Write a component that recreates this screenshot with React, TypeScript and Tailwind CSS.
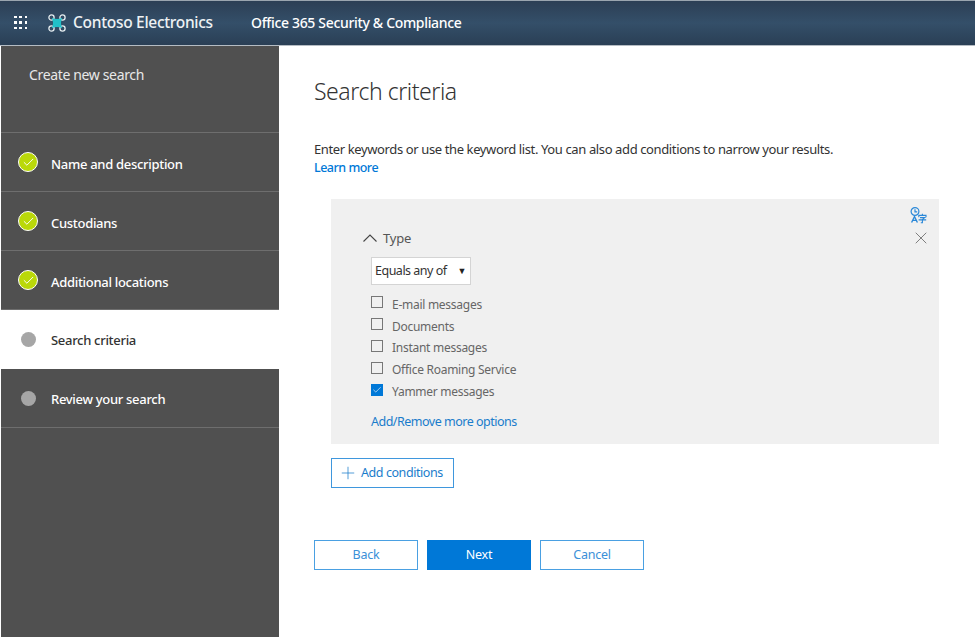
import { Check, Plus, X } from 'lucide-react'

const steps = [
  { label: 'Name and description', state: 'done' },
  { label: 'Custodians', state: 'done' },
  { label: 'Additional locations', state: 'done' },
  { label: 'Search criteria', state: 'current' },
  { label: 'Review your search', state: 'todo' },
]

const options = [
  { label: 'E-mail messages', checked: false },
  { label: 'Documents', checked: false },
  { label: 'Instant messages', checked: false },
  { label: 'Office Roaming Service', checked: false },
  { label: 'Yammer messages', checked: true },
]

function Waffle() {
  return (
    <div className="grid grid-cols-3 gap-[3px] w-[13px]">
      {Array.from({ length: 9 }).map((_, i) => (
        <span key={i} className="w-[2.5px] h-[2.5px] bg-white" />
      ))}
    </div>
  )
}

function Logo() {
  return (
    <svg width="18" height="18" viewBox="0 0 18 18" fill="none">
      <circle cx="3.5" cy="3.5" r="2.6" stroke="#e6edf0" strokeWidth="1.3" />
      <circle cx="14.5" cy="3.5" r="2.6" stroke="#e6edf0" strokeWidth="1.3" />
      <circle cx="3.5" cy="14.5" r="2.6" stroke="#e6edf0" strokeWidth="1.3" />
      <circle cx="14.5" cy="14.5" r="2.6" stroke="#e6edf0" strokeWidth="1.3" />
      <path d="M3.8 3.8 Q9 6.2 14.2 3.8 Q11.8 9 14.2 14.2 Q9 11.8 3.8 14.2 Q6.2 9 3.8 3.8 Z" fill="#21c0c8" />
    </svg>
  )
}

function TranslateIcon() {
  return (
    <svg width="17" height="17" viewBox="0 0 17 17" fill="none" stroke="#2b88d8" strokeWidth="1.2">
      <circle cx="5" cy="4.5" r="3.9" />
      <path d="M5 2.3 V4.8 H7.2" />
      <path d="M1.6 15.5 L4.5 9.5 L7.4 15.5 M2.8 13.4 H6.2" strokeWidth="1.4" />
      <path d="M12.4 6.8 V8.4 M8.8 10.2 V8.4 H16 V10.2 M10 10.6 H14.8 L12.4 12.4 V15.8 L10.8 15.8 M8.6 12.9 H16.2" strokeWidth="1.1" />
    </svg>
  )
}

function StepDot({ state }: { state: string }) {
  if (state === 'done') {
    return (
      <span className="w-5 h-5 rounded-full bg-[#bad80a] border-[1.5px] border-white flex items-center justify-center">
        <Check className="w-[13px] h-[13px] text-white" strokeWidth={1.75} />
      </span>
    )
  }
  return (
    <span className="w-5 h-5 flex items-center justify-center">
      <span className="w-[15px] h-[15px] rounded-full bg-[#a6a6a6]" />
    </span>
  )
}

export default function App() {
  return (
    <div className="h-[637px] w-[975px] overflow-hidden bg-white flex flex-col font-['Noto_Sans',sans-serif] text-[#333333]">
      {/* Top bar */}
      <header className="h-[46px] shrink-0 bg-gradient-to-b from-[#2c3f55] via-[#344f69] to-[#2a3f55] border-t border-t-[#9aa5af] border-b border-b-[#b5bcc3] flex items-center text-white">
        <div className="pl-[14px] w-[48px] -mt-px">
          <Waffle />
        </div>
        <Logo />
        <span className="ml-[7px] text-[15.5px] font-medium tracking-[-0.3px] w-[178px] text-[#eef2f4]">Contoso Electronics</span>
        <span className="-mt-px text-[14px] tracking-[-0.33px] font-medium">Office 365 Security &amp; Compliance</span>
      </header>

      <div className="flex flex-1 min-h-0">
        {/* Wizard steps */}
        <aside className="ml-px w-[278px] shrink-0 bg-[#505050] text-white">
          <div className="h-[87px] pl-[28px] pt-[19px] text-[14px] leading-5 tracking-[-0.35px] text-[#e8e8e8] border-b border-[#6e6e6e]">
            Create new search
          </div>
          {steps.map((s) => (
            <div
              key={s.label}
              className={
                s.state === 'current'
                  ? 'h-[59px] pl-[17px] flex items-center gap-[13px] bg-white text-[#333333] text-[13px] tracking-[-0.3px] font-medium'
                  : 'h-[59px] pl-[17px] flex items-center gap-[13px] border-b border-[#6e6e6e] text-[13px] tracking-[-0.3px] font-medium'
              }
            >
              <StepDot state={s.state} />
              <span className={s.state === 'done' ? 'mt-[5px]' : s.state === 'todo' ? 'mt-[3px]' : 'mt-[2px]'}>{s.label}</span>
            </div>
          ))}
        </aside>

        {/* Main content */}
        <main className="flex-1 pl-[35px] pr-[35px] pt-[26px]">
          <h1 className="text-[23px] leading-[38px] font-light tracking-[-0.45px] text-[#333333]">Search criteria</h1>
          <p className="mt-[30px] text-[13px] leading-[18px] tracking-[-0.38px] text-[#333333]">
            Enter keywords or use the keyword list. You can also add conditions to narrow your results.
          </p>
          <a className="mt-px text-[12.5px] leading-[18px] tracking-[-0.5px] font-medium text-[#0078d7] block">Learn more</a>

          <section className="relative mt-[22px] ml-[17px] h-[245px] w-[608px] bg-[#f0f0f0] pl-[40px] pt-[29px]">
            <div className="absolute right-[12px] top-[8px]">
              <TranslateIcon />
            </div>
            <X className="absolute right-[8px] top-[29px] w-5 h-5 text-[#666666]" strokeWidth={1} />
            <div className="flex items-center gap-[6px] text-[13px] leading-5 tracking-[-0.2px] text-[#555555] -ml-[8px]">
              <svg width="14" height="8" viewBox="0 0 14 8" fill="none" stroke="#444444" strokeWidth="1.1">
                <path d="M0.5 7.5 L7 1 L13.5 7.5" />
              </svg>
              Type
            </div>
            <div className="mt-[9px] w-[100px] h-[28px] bg-white border border-[#d4d4d4] flex items-center justify-between pl-[3px] pr-[4px] text-[12.5px] tracking-[-0.5px] text-[#333333]">
              Equals any of
              <span className="text-[9px] text-[#222222]">▼</span>
            </div>
            <ul className="mt-[9px] flex flex-col">
              {options.map((o) => (
                <li key={o.label} className="h-[21.8px] flex items-center gap-[9px] text-[12px] tracking-[-0.27px] text-[#666666]">
                  {o.checked ? (
                    <span className="-mt-[5px] w-3 h-3 bg-[#0078d7] flex items-center justify-center">
                      <Check className="w-[10px] h-[10px] text-white" strokeWidth={1.5} />
                    </span>
                  ) : (
                    <span className="-mt-[5px] w-3 h-3 border border-[#777777]" />
                  )}
                  {o.label}
                </li>
              ))}
            </ul>
            <a className="block mt-[10px] text-[12.5px] leading-[18px] tracking-[-0.5px] text-[#1a7ccb]">Add/Remove more options</a>
          </section>

          <button className="mt-[14px] ml-[17px] w-[123px] h-[30px] border border-[#3f97dd] flex items-center pl-[6px] gap-[3px] text-[12.5px] tracking-[-0.43px] text-[#1a7ccb]">
            <Plus className="w-5 h-5" strokeWidth={0.9} />
            Add conditions
          </button>

          <div className="mt-[52px] flex gap-[9px] text-[12.5px] tracking-[-0.25px]">
            <button className="w-[104px] h-[30px] border border-[#4aa0e2] text-[#3b90d8]">Back</button>
            <button className="w-[104px] h-[30px] bg-[#0078d7] text-white">Next</button>
            <button className="w-[104px] h-[30px] border border-[#4aa0e2] text-[#3b90d8]">Cancel</button>
          </div>
        </main>
      </div>
    </div>
  )
}
